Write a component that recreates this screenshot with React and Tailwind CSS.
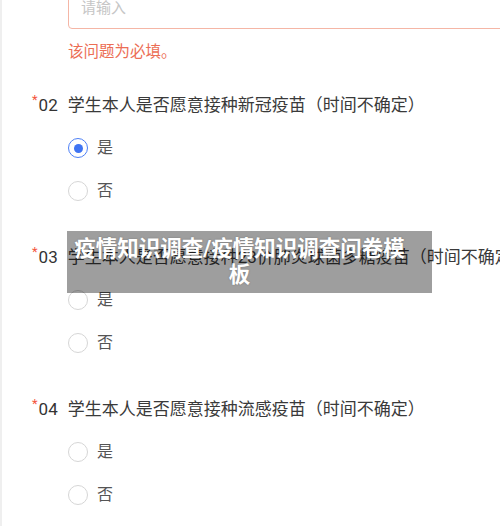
import React from "react";

function Radio({ label, checked }) {
  return (
    <div className="mt-[19px] flex h-6 items-center pl-[66px]">
      {checked ? (
        <span className="flex h-5 w-5 items-center justify-center rounded-full border-[1.5px] border-[#4d80f6]">
          <span className="h-[9px] w-[9px] rounded-full bg-[#3f74f3]" />
        </span>
      ) : (
        <span className="h-5 w-5 rounded-full border-[1.5px] border-[#d6d6d6]" />
      )}
      <span className="ml-[9px] text-[16px] leading-6 text-[#555555]">{label}</span>
    </div>
  );
}

function Question({ num, text, first, checkedYes }) {
  return (
    <div className={first ? "mt-[31px]" : "mt-[42px]"}>
      <div className="flex h-6 items-center whitespace-nowrap pl-[30px]">
        <span className="self-start text-[13px] leading-[13px] text-[#f4553d]">*</span>
        <span className="ml-[1px] text-[17px] leading-6 text-[#333333]">{num}</span>
        <span className="ml-[10px] text-[17px] leading-6 text-[#3a3a3a]">{text}</span>
      </div>
      <Radio label="是" checked={checkedYes} />
      <Radio label="否" />
    </div>
  );
}

export default function App() {
  return (
    <div className="relative h-[526px] w-[500px] overflow-hidden border-l-2 border-[#efefef] bg-white font-['Roboto','Noto_Sans_CJK_SC',sans-serif]">
      <div className="-mt-[12px] ml-[66px] flex h-[41px] w-[460px] items-center rounded-[4px] border border-[#f5b6a6] pl-[12px] text-[15px] text-[#c6c6c6]">
        请输入
      </div>
      <div className="ml-[66px] mt-[13px] text-[15.5px] leading-5 text-[#ec6e55]">该问题为必填。</div>

      <Question first num="02" text="学生本人是否愿意接种新冠疫苗（时间不确定）" checkedYes />
      <Question num="03" text="学生本人是否愿意接种23价肺炎球菌多糖疫苗（时间不确定）" />
      <Question num="04" text="学生本人是否愿意接种流感疫苗（时间不确定）" />

      <div className="absolute left-[65px] top-[231px] flex h-[62px] w-[365px] items-center bg-black/[0.38]">
        <div className="w-full pl-[6px] pr-[26px] text-center text-[21.5px] font-bold leading-[26px] text-white [text-shadow:0_0_2px_rgba(0,0,0,0.25)]">
          疫情知识调查/疫情知识调查问卷模板
        </div>
      </div>
    </div>
  );
}
